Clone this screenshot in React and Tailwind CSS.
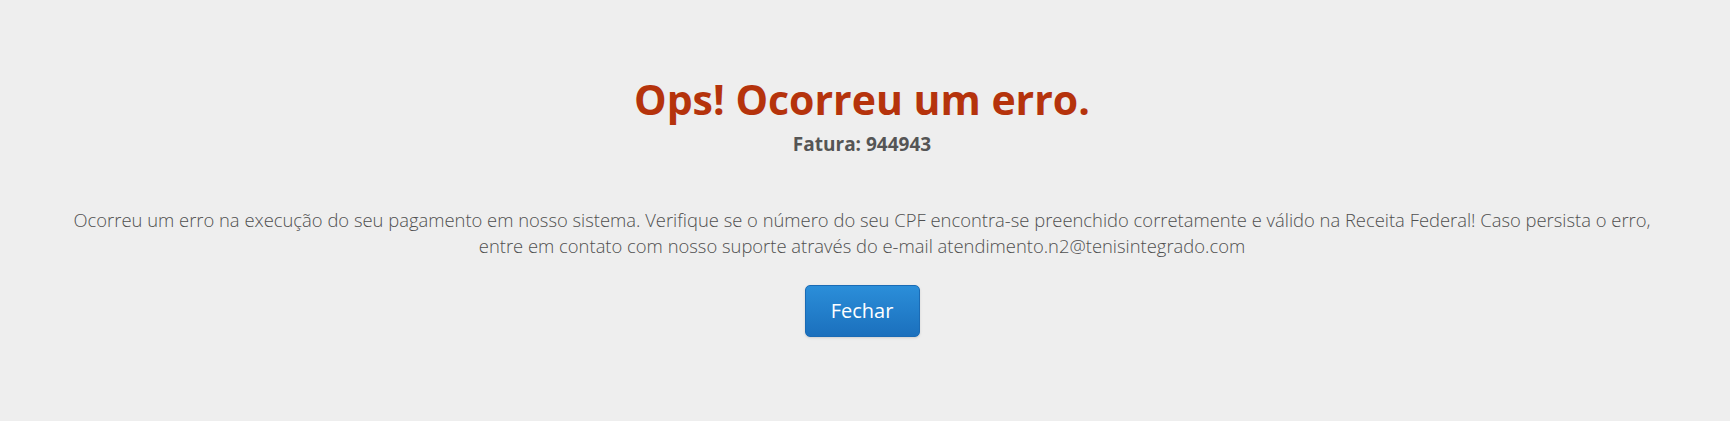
import React from 'react';

export default function App() {
  return (
    <div className="w-full h-[421px] bg-[#eeeeee] flex flex-col items-center pr-[6px] font-['Open_Sans',sans-serif]">
      <h1 className="mt-[74px] text-[41px] leading-[50px] font-bold text-[#b5330c]">
        Ops! Ocorreu um erro.
      </h1>
      <p className="mt-[7px] text-[19px] leading-[26px] font-bold text-[#555555]">Fatura: 944943</p>

      <p className="mt-[50px] max-w-[1700px] text-center text-[18.4px] leading-[25.5px] font-light text-[#505050]">
        Ocorreu um erro na execução do seu pagamento em nosso sistema. Verifique se o número do seu CPF encontra-se preenchido corretamente e válido na Receita Federal! Caso persista o erro,
        <br />
        entre em contato com nosso suporte através do e-mail atendimento.n2@tenisintegrado.com
      </p>

      <button className="mt-[27px] w-[115px] h-[52px] rounded-[5px] bg-gradient-to-b from-[#2b8ed9] to-[#1b70bd] border border-[#1a6bb5] text-white text-[20px] shadow-sm">
        Fechar
      </button>
    </div>
  );
}
